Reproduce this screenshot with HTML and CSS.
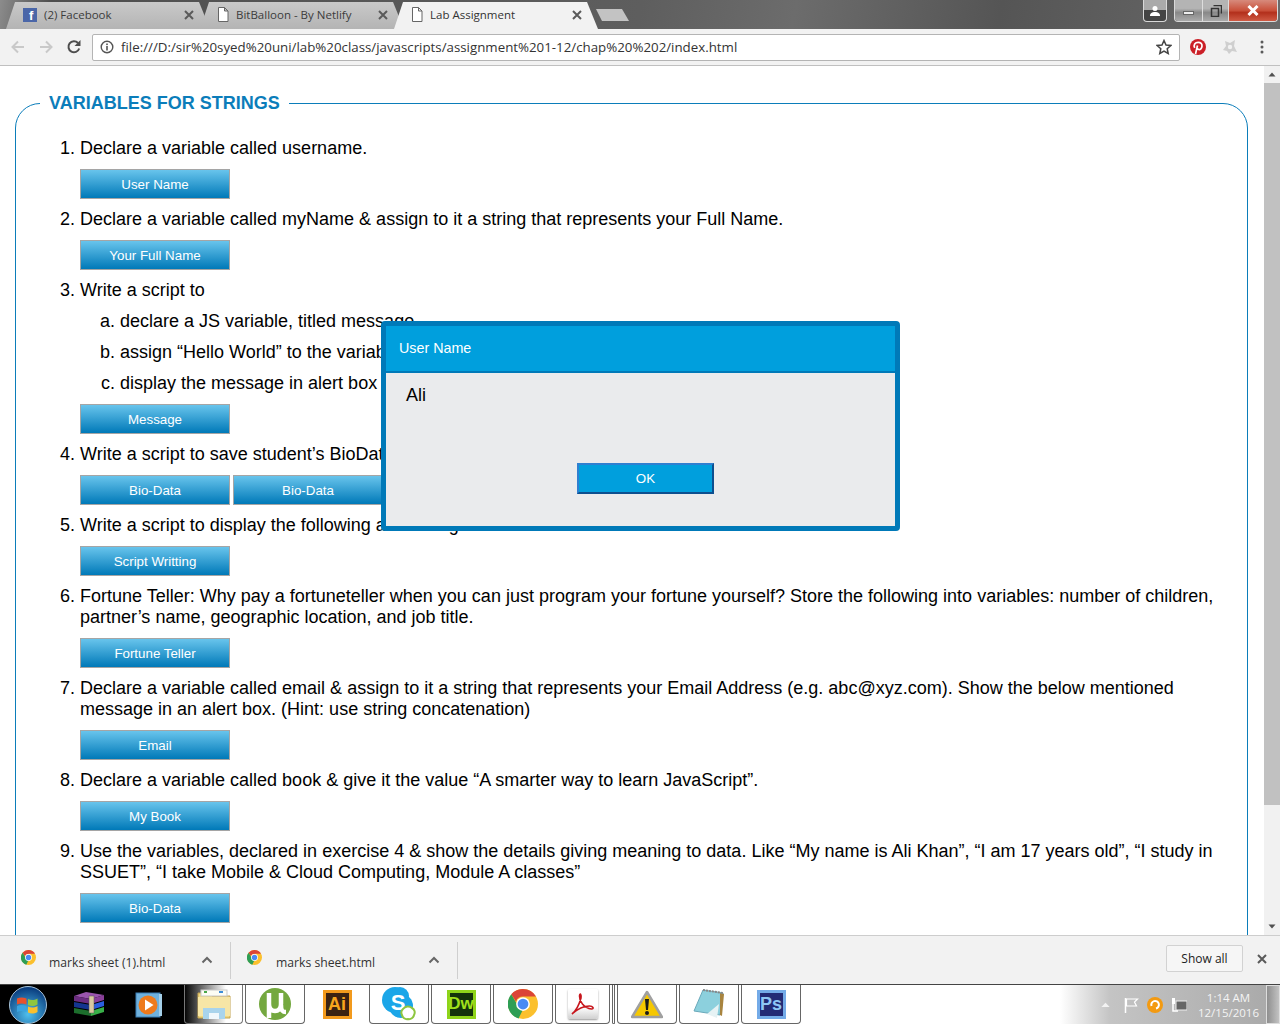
FILE: index.html
```html
<!DOCTYPE html>
<html lang="en">
<head>
<meta charset="utf-8">
<title>Lab Assignment</title>
<link rel="stylesheet" href="styles.css">
</head>
<body>
<svg class="defs" width="0" height="0" aria-hidden="true">
  <symbol id="chrome" viewBox="0 0 48 48">
    <circle cx="24" cy="24" r="24" fill="#fbc02d"/>
    <path d="M24 0a24 24 0 0 1 20.8 12H24a12 12 0 0 0-11.3 8L5.2 8.4A24 24 0 0 1 24 0z" fill="#db4437"/>
    <path d="M5.2 8.4l10.6 18.2a9 9 0 0 0 8 6.4L17 47A24 24 0 0 1 5.2 8.4z" fill="#2e9e55"/>
    <circle cx="24" cy="24" r="11" fill="#fff"/>
    <circle cx="24" cy="24" r="8.6" fill="#4a8af4"/>
  </symbol>
  <symbol id="page" viewBox="0 0 12 15">
    <path d="M1.500.5h6l3.500 3.500v10.500h-9.500zM7.500.5v3.500h3.500" fill="#fff" stroke="#666" stroke-width="1"/>
  </symbol>
  <symbol id="cross" viewBox="0 0 10 10">
    <path d="M1 1l8 8M9 1l-8 8" stroke="#5a5a5a" stroke-width="2" fill="none"/>
  </symbol>
  <symbol id="caret" viewBox="0 0 12 8">
    <path d="M1.500 6.500L6 2l4.500 4.500" stroke="#666" stroke-width="2" fill="none"/>
  </symbol>
</svg>

<header class="chrome">
  <div class="tabstrip">
    <div class="tab">
      <span class="fb-icon">f</span>
      <span class="tab-title">(2) Facebook</span>
      <svg class="tab-x"><use href="#cross"/></svg>
    </div>
    <div class="tab">
      <svg class="ico-page"><use href="#page"/></svg>
      <span class="tab-title">BitBalloon - By Netlify</span>
      <svg class="tab-x"><use href="#cross"/></svg>
    </div>
    <div class="tab tab-active">
      <svg class="ico-page"><use href="#page"/></svg>
      <span class="tab-title">Lab Assignment</span>
      <svg class="tab-x"><use href="#cross"/></svg>
    </div>
    <div class="newtab"></div>
    <div class="winctl">
      <div class="win-user">
        <svg width="12" height="12" viewBox="0 0 12 12"><circle cx="6" cy="3.500" r="2.500" fill="#fff"/><path d="M1 11c0-3 2-4 5-4s5 1 5 4z" fill="#fff"/></svg>
      </div>
      <div class="win-group">
        <div class="win-btn win-min"><span class="min-bar"></span></div>
        <div class="win-btn win-max">
          <svg width="12" height="12" viewBox="0 0 12 12"><path d="M3.500.5h8v8M1.500 3.500h7v8h-7z" fill="none" stroke="#333" stroke-width="1.500"/></svg>
        </div>
        <div class="win-btn win-close">
          <svg width="14" height="11" viewBox="0 0 14 11"><path d="M2.500 1l9 9M11.500 1l-9 9" stroke="#fff" stroke-width="3" fill="none"/></svg>
        </div>
      </div>
    </div>
  </div>
  <div class="toolbar">
    <svg class="tool-ico" viewBox="0 0 16 16"><path d="M14 8H3M8 2.500L2.500 8 8 13.500" stroke="#c9c9c9" stroke-width="2" fill="none"/></svg>
    <svg class="tool-ico" viewBox="0 0 16 16"><path d="M2 8h11M8 2.500L13.500 8 8 13.500" stroke="#c9c9c9" stroke-width="2" fill="none"/></svg>
    <svg class="tool-ico" viewBox="0 0 16 16"><path d="M13.200 9.500A5.500 5.500 0 1 1 12 4" stroke="#4d4d4d" stroke-width="2" fill="none"/><path d="M14.500 1v6h-6z" fill="#4d4d4d"/></svg>
    <div class="omnibox">
      <svg class="info-ico" viewBox="0 0 14 14"><circle cx="7" cy="7" r="5.800" fill="none" stroke="#555" stroke-width="1.400"/><rect x="6.200" y="6" width="1.600" height="4.500" fill="#555"/><rect x="6.200" y="3.500" width="1.600" height="1.600" fill="#555"/></svg>
      <span class="url">file:///D:/sir%20syed%20uni/lab%20class/javascripts/assignment%201-12/chap%20%202/index.html</span>
      <svg class="star-ico" viewBox="0 0 16 16"><path d="M8 1.500l2 4.500 4.800.5-3.600 3.200 1 4.800L8 12l-4.200 2.500 1-4.800L1.200 6.500 6 6z" fill="none" stroke="#444" stroke-width="1.500"/></svg>
    </div>
    <div class="ext-icons">
      <svg class="ext-ico" viewBox="0 0 16 16"><circle cx="8" cy="8" r="8" fill="#cb1f27"/><path d="M5.500 15l2-8.500M4.700 8.800C3.200 6 5 3.300 8.200 3.300c2.600 0 4 1.700 3.800 3.800-.2 2.300-1.800 3.800-3.300 3.400-.9-.2-1.300-.8-1.300-1.500" stroke="#fff" stroke-width="1.700" fill="none"/></svg>
      <svg class="ext-ico" viewBox="0 0 16 16"><path d="M3 2l5 2 5-3-1 6 3 6-5-1-3 3-2-3-4-1 3-4z" fill="#cfcfcf"/><circle cx="8" cy="8" r="2.200" fill="#f2f2f2"/></svg>
      <svg class="ext-ico" viewBox="0 0 16 16"><circle cx="8" cy="3" r="1.500" fill="#5a5a5a"/><circle cx="8" cy="8" r="1.500" fill="#5a5a5a"/><circle cx="8" cy="13" r="1.500" fill="#5a5a5a"/></svg>
    </div>
  </div>
</header>

<main class="viewport">
  <div class="page">
    <fieldset class="panel">
      <legend class="panel-title">VARIABLES FOR STRINGS</legend>
      <ol class="tasks">
        <li>Declare a variable called username.
          <div class="btns"><button class="btn">User Name</button></div>
        </li>
        <li>Declare a variable called myName &amp; assign to it a string that represents your Full Name.
          <div class="btns"><button class="btn">Your Full Name</button></div>
        </li>
        <li>Write a script to
          <ol class="subtasks">
            <li>declare a JS variable, titled message</li>
            <li>assign “Hello World” to the variable</li>
            <li>display the message in alert box</li>
          </ol>
          <div class="btns"><button class="btn">Message</button></div>
        </li>
        <li>Write a script to save student’s BioData:
          <div class="btns"><button class="btn">Bio-Data</button><button class="btn">Bio-Data</button></div>
        </li>
        <li>Write a script to display the following alert using
          <div class="btns"><button class="btn">Script Writting</button></div>
        </li>
        <li>Fortune Teller: Why pay a fortuneteller when you can just program your fortune yourself? Store the following into variables: number of children, partner’s name, geographic location, and job title.
          <div class="btns"><button class="btn">Fortune Teller</button></div>
        </li>
        <li>Declare a variable called email &amp; assign to it a string that represents your Email Address (e.g. abc@xyz.com). Show the below mentioned message in an alert box. (Hint: use string concatenation)
          <div class="btns"><button class="btn">Email</button></div>
        </li>
        <li>Declare a variable called book &amp; give it the value “A smarter way to learn JavaScript”.
          <div class="btns"><button class="btn">My Book</button></div>
        </li>
        <li>Use the variables, declared in exercise 4 &amp; show the details giving meaning to data. Like “My name is Ali Khan”, “I am 17 years old”, “I study in SSUET”, “I take Mobile &amp; Cloud Computing, Module A classes”
          <div class="btns"><button class="btn">Bio-Data</button></div>
        </li>
      </ol>
    </fieldset>
  </div>
  <div class="scrollbar">
    <svg class="sb-arrow" viewBox="0 0 16 16"><path d="M4.500 10L8 6l3.500 4z" fill="#505050"/></svg>
    <div class="sb-track"><div class="sb-thumb"></div></div>
    <svg class="sb-arrow" viewBox="0 0 16 16"><path d="M4.500 6L8 10l3.500-4z" fill="#505050"/></svg>
  </div>
  <div class="dialog">
    <div class="dialog-head">User Name</div>
    <div class="dialog-body">
      <p class="dialog-msg">Ali</p>
      <div class="dialog-foot"><button class="dialog-ok">OK</button></div>
    </div>
  </div>
</main>

<section class="downloads">
  <div class="dl-item">
    <svg class="dl-ico"><use href="#chrome"/></svg>
    <span class="dl-name">marks sheet (1).html</span>
    <svg class="dl-caret"><use href="#caret"/></svg>
  </div>
  <div class="dl-item">
    <svg class="dl-ico"><use href="#chrome"/></svg>
    <span class="dl-name">marks sheet.html</span>
    <svg class="dl-caret"><use href="#caret"/></svg>
  </div>
  <div class="dl-spacer"></div>
  <button class="showall">Show all</button>
  <svg class="dl-close"><use href="#cross"/></svg>
</section>

<footer class="taskbar">
  <div class="start">
    <svg width="38" height="38" viewBox="0 0 38 38">
      <defs><radialGradient id="orb" cx="50%" cy="75%" r="70%"><stop offset="0" stop-color="#4fc0ee"/><stop offset="1" stop-color="#0b3f80"/></radialGradient></defs>
      <circle cx="19" cy="19" r="18.500" fill="url(#orb)" stroke="#a8c4d8"/>
      <path d="M8 12.500c3-1.500 6-1.500 9.500 0v6c-3.500-1.500-6.500-1.500-9.500 0z" fill="#e8522d"/>
      <path d="M19 13c3 1.500 6 1.500 9.500-.5v6c-3.500 2-6.500 2-9.500.5z" fill="#8fc63f"/>
      <path d="M8 20c3-1.500 6-1.500 9.500 0v6c-3.500-1.500-6.500-1.500-9.500 0z" fill="#3aa4e0"/>
      <path d="M19 20.500c3 1.500 6 1.500 9.500-.5v6c-3.500 2-6.500 2-9.500.5z" fill="#fbc02d"/>
    </svg>
  </div>
  <div class="tb-pin tb-winrar">
    <svg width="32" height="26" viewBox="0 0 32 26">
      <path d="M1 4l12-4 18 3-13 4z" fill="#9a55ad"/><path d="M1 4l17 3v5L1 9z" fill="#6b2d80"/><path d="M18 7l13-4v5l-13 4z" fill="#8a3f9a"/>
      <path d="M1 10l17 3v5L1 15z" fill="#14358f"/><path d="M18 13l13-4v5l-13 4z" fill="#2a5ee0"/>
      <path d="M1 16l17 3v5L1 21z" fill="#1c6e2c"/><path d="M18 19l13-4v5l-13 4z" fill="#38b048"/>
      <rect x="16" y="4" width="5" height="17" fill="#d9c9a0" stroke="#555" stroke-width=".5"/>
    </svg>
  </div>
  <div class="tb-pin tb-media">
    <svg width="28" height="28" viewBox="0 0 28 28">
      <rect x="1" y="2" width="24" height="24" fill="#6fb1dd" stroke="#3a7fb5"/><rect x="24" y="3" width="3" height="22" fill="#a4cfe9"/>
      <circle cx="13" cy="14" r="9.500" fill="#ee7a1c"/><path d="M10 8.500L18.500 14 10 19.500z" fill="#fff"/>
    </svg>
  </div>
  <div class="tb-app tb-folder">
    <svg width="34" height="33" viewBox="0 0 34 33">
      <path d="M1 5h12l2 3h18v22H1z" fill="#f1d77f" stroke="#c3a350"/><rect x="4" y="2" width="26" height="6" fill="#fdfdf5" stroke="#c9c9c9"/>
      <rect x="7" y="3" width="3" height="2" fill="#4aa84a"/><rect x="22" y="3" width="4" height="2" fill="#3d8ed8"/>
      <rect x="1" y="9" width="32" height="19" fill="#f7e6a6"/><rect x="6" y="20" width="22" height="11" fill="#a9d4ec"/><rect x="12" y="25" width="10" height="6" fill="#f0f8fc"/>
    </svg>
  </div>
  <div class="tb-app">
    <svg width="32" height="32" viewBox="0 0 32 32">
      <circle cx="16" cy="16" r="16" fill="#74a83f"/>
      <path d="M10 5v25M10 16c0 5 3 7 6 7s6-2 6-7V5M22 17c0 5 1 7 5 7" fill="none" stroke="#fff" stroke-width="4.500"/>
    </svg>
  </div>
  <div class="tb-pin tb-ai"><span class="logo logo-ai">Ai</span></div>
  <div class="tb-app">
    <svg width="34" height="34" viewBox="0 0 34 34">
      <circle cx="13" cy="13" r="13" fill="#1ba6e8"/><rect x="9" y="0" width="18" height="18" rx="9" fill="#1ba6e8"/><circle cx="19" cy="19" r="12" fill="#1ba6e8"/>
      <text x="16" y="23" class="skype-s">S</text>
      <path d="M21 22a6 6 0 0 1 9-1 5 5 0 0 1 2 7 5 5 0 0 1-6 4 5 5 0 0 1-6-4 5 5 0 0 1 1-6z" fill="#fff" stroke="#8ec63f" stroke-width="2"/>
    </svg>
  </div>
  <div class="tb-app"><span class="logo logo-dw">Dw</span></div>
  <div class="tb-app"><svg width="30" height="30"><use href="#chrome"/></svg></div>
  <div class="tb-app tb-narrow">
    <div class="pdf-tile">
      <svg width="26" height="26" viewBox="0 0 26 26"><path d="M2 23c4-3 7-9 9-16 .5-3-1-6-1.500-2-.2 5 4 12 12 13 3 0 1.500-3-2-3-6 0-12 3-17.500 8z" fill="none" stroke="#c7161d" stroke-width="1.600"/></svg>
    </div>
  </div>
  <div class="tb-sliver"></div>
  <div class="tb-app">
    <svg width="32" height="29" viewBox="0 0 32 29">
      <path d="M16 2L31 27H1z" fill="#f6c800" stroke="#a0a0a0" stroke-width="2.500" stroke-linejoin="round"/>
      <path d="M14 9h4l-1 11h-2z" fill="#1a1a1a"/><circle cx="16" cy="23" r="2" fill="#1a1a1a"/>
    </svg>
  </div>
  <div class="tb-app">
    <svg width="32" height="31" viewBox="0 0 32 31">
      <path d="M10 1l20 3-3 22L1 22z" fill="#8cd0dd" stroke="#6aa9ba"/><path d="M27 4l4 1-2 22-2-1z" fill="#a8843f"/>
      <path d="M26 15l-2 14-10-4z" fill="#e6f2f4"/><path d="M10 1l20 3" stroke="#888" stroke-width="2" stroke-dasharray="2 1"/>
    </svg>
  </div>
  <div class="tb-app"><span class="logo logo-ps">Ps</span></div>
  <div class="tb-spacer"></div>
  <div class="tray">
    <svg class="tray-up" viewBox="0 0 10 6"><path d="M0 6l5-5 5 5z" fill="#f2f2f2"/></svg>
    <svg class="tray-ico" viewBox="0 0 16 16"><path d="M2.500 1v15" stroke="#fff" stroke-width="1.500"/><path d="M3.500 2h11l-3 3 2 4h-10z" fill="none" stroke="#fff" stroke-width="1.200"/></svg>
    <svg class="tray-ico" viewBox="0 0 16 16"><circle cx="8" cy="8" r="8" fill="#f39a11"/><path d="M4.500 9A3.800 3.800 0 1 1 9 11.500" stroke="#fff" stroke-width="2" fill="none"/></svg>
    <svg class="tray-ico" viewBox="0 0 16 16"><rect x="5" y="4" width="11" height="9" fill="#666" stroke="#eee"/><path d="M2 2v12h5" stroke="#fff" stroke-width="1.500" fill="none"/><rect x="1" y="1" width="3" height="6" fill="#fff"/></svg>
    <div class="clock"><span>1:14 AM</span><span>12/15/2016</span></div>
    <div class="show-desktop"></div>
  </div>
</footer>
</body>
</html>
```

FILE: styles.css
```css
* { box-sizing: border-box; }
html, body { margin: 0; height: 100%; }
body {
  width: 1280px;
  height: 1024px;
  overflow: hidden;
  display: flex;
  flex-direction: column;
  font-family: "Liberation Sans", Arial, sans-serif;
  background: #fff;
  color: #000;
}
.defs { position: absolute; }

/* Browser frame */
.chrome { flex: none; height: 66px; display: flex; flex-direction: column; }
.tabstrip {
  height: 29px;
  display: flex;
  align-items: flex-end;
  padding-left: 6px;
  background: linear-gradient(100deg, #8c8c8c 0, #4e4e4e 4%, #5e5e5e 50%, #6c6c6c 62%, #555 78%, #6a6a6a 100%);
}
.tab {
  width: 204px;
  height: 27px;
  margin-right: -10px;
  padding: 0 16px 2px 17px;
  display: flex;
  align-items: center;
  gap: 7px;
  clip-path: polygon(9px 0, calc(100% - 11px) 0, 100% 100%, 0 100%);
  background: linear-gradient(#c9c9c9, #b4b4b4);
  font: 11.500px "Open Sans", sans-serif;
  color: #3c3c3c;
}
.tab-active { background: #f2f2f2; color: #333; position: relative; }
.fb-icon {
  width: 14px;
  height: 14px;
  flex: none;
  padding: 1px 0 0 6px;
  background: #4a66a8;
  color: #fff;
  font: bold 13px/13px "Liberation Sans", sans-serif;
}
.ico-page { width: 12px; height: 15px; flex: none; }
.tab-title { flex: 1; white-space: nowrap; overflow: hidden; }
.tab-x { width: 10px; height: 10px; flex: none; }
.newtab {
  width: 33px;
  height: 12px;
  margin: 0 0 8px 8px;
  clip-path: polygon(0 0, 26px 0, 100% 100%, 6px 100%);
  background: #c3c3c3;
}
.winctl { margin-left: auto; align-self: flex-start; display: flex; gap: 7px; padding-right: 2px; }
.win-user, .win-group {
  height: 22px;
  border: 1px solid #d9d9d9;
  border-top: none;
  border-radius: 0 0 4px 4px;
  overflow: hidden;
  display: flex;
}
.win-user {
  width: 24px;
  align-items: center;
  justify-content: center;
  background: linear-gradient(#aaa 50%, #444 50%);
}
.win-btn { height: 100%; display: flex; align-items: center; justify-content: center; }
.win-min, .win-max { background: linear-gradient(#b4b4b4 40%, #888 60%, #aaa); border-right: 1px solid #ddd; }
.win-min { width: 28px; }
.win-max { width: 26px; }
.win-close { width: 48px; background: linear-gradient(#d78a7c 0, #c9503a 50%, #b3301c 60%, #cf5a44); }
.min-bar { width: 11px; height: 4px; margin-top: 4px; background: #eee; border: 1px solid #666; }

.toolbar {
  height: 37px;
  display: flex;
  align-items: center;
  padding: 0 10px;
  gap: 12px;
  background: #f2f2f2;
  border-bottom: 1px solid #c0c0c0;
}
.tool-ico { width: 16px; height: 16px; flex: none; }
.omnibox {
  flex: none;
  width: 1088px;
  height: 27px;
  margin-left: -2px;
  display: flex;
  align-items: center;
  gap: 7px;
  padding: 0 7px;
  background: #fff;
  border: 1px solid #b4b4b4;
  border-radius: 2px;
  font: 13.300px "Open Sans", sans-serif;
  color: #333;
}
.info-ico { width: 14px; height: 14px; flex: none; }
.url { flex: 1; white-space: nowrap; overflow: hidden; }
.star-ico { width: 16px; height: 16px; flex: none; }
.ext-icons { display: flex; gap: 16px; margin-left: -2px; }
.ext-ico { width: 16px; height: 16px; flex: none; }

/* Page */
.viewport { flex: 1; min-height: 0; display: flex; position: relative; }
.page { flex: 1; min-width: 0; overflow: hidden; }
.panel {
  margin: 27px 16px 0 15px;
  padding: 0 0 60px;
  min-width: 0;
  border: 1px solid #0b7dba;
  border-radius: 25px;
}
.panel-title {
  margin-left: 24px;
  padding: 0 9px;
  font-size: 18px;
  line-height: 21px;
  font-weight: bold;
  color: #0b7dba;
}
.tasks {
  margin: 24px 0 0;
  padding: 0 19px 0 64px;
  font-size: 18px;
  line-height: 21px;
}
.tasks > li { padding-bottom: 10px; }
.subtasks { margin: 10px 0 0; padding-left: 40px; list-style: lower-alpha; }
.subtasks > li { margin-bottom: 10.050px; }
.btns { display: flex; gap: 3px; margin-top: 10px; }
.btn {
  width: 150px;
  height: 30px;
  padding: 0;
  border: 1px solid #a5a5a5;
  background: linear-gradient(#68c4ec, #0079b8);
  color: #fff;
  font: 13.330px "Liberation Sans", sans-serif;
}

/* Dialog */
.dialog {
  position: absolute;
  left: 381px;
  top: 255px;
  width: 519px;
  height: 210px;
  display: flex;
  flex-direction: column;
  border: 5px solid #0079b8;
  border-radius: 4px;
  background: #eaebed;
}
.dialog-head {
  height: 47px;
  flex: none;
  padding: 0 0 2px 13px;
  display: flex;
  align-items: center;
  background: #009fdd;
  border-bottom: 2px solid #0079b8;
  color: #fff;
  font-size: 14.300px;
}
.dialog-body { flex: 1; display: flex; flex-direction: column; padding: 12px 20px 32px; }
.dialog-msg { margin: 0; flex: 1; font-size: 18px; line-height: 21px; }
.dialog-foot { display: flex; justify-content: center; padding-left: 10px; }
.dialog-ok {
  width: 137px;
  height: 31px;
  padding: 0;
  background: #009fdd;
  border: 2px solid;
  border-color: #2f7fd0 #0d4f8f #0d4f8f #2f7fd0;
  color: #fff;
  font: 13.330px "Liberation Sans", sans-serif;
}

/* Scrollbar */
.scrollbar { width: 16px; flex: none; display: flex; flex-direction: column; background: #f1f1f1; }
.sb-arrow { width: 16px; height: 17px; flex: none; }
.sb-track { flex: 1; min-height: 0; }
.sb-thumb { height: 722px; background: #c1c1c1; }

/* Downloads */
.downloads {
  flex: none;
  height: 49px;
  display: flex;
  align-items: center;
  background: #f2f2f2;
  border-top: 1px solid #cdcdcd;
  font: 12.200px "Open Sans", sans-serif;
  color: #333;
}
.dl-item {
  width: 231px;
  height: 37px;
  padding-left: 21px;
  display: flex;
  align-items: center;
  border-right: 1px solid #cfcfcf;
}
.dl-item + .dl-item { width: 227px; padding-left: 16px; }
.dl-item + .dl-item .dl-ico { margin-right: 14px; }
.dl-ico { width: 15px; height: 15px; flex: none; margin: -6px 13px 0 0; }
.dl-name { width: 152px; flex: none; white-space: nowrap; padding-top: 4px; }
.dl-caret { width: 12px; height: 8px; flex: none; }
.dl-spacer { flex: 1; }
.showall {
  width: 77px;
  height: 27px;
  margin-top: -3px;
  padding: 0;
  background: #f6f6f6;
  border: 1px solid #d2d2d2;
  border-radius: 2px;
  color: #222;
  font: 12px "Open Sans", sans-serif;
}
.dl-close { width: 10px; height: 10px; margin: -3px 13px 0 14px; }

/* Taskbar */
.taskbar {
  flex: none;
  height: 40px;
  display: flex;
  align-items: stretch;
  gap: 2px;
  border-top: 1px solid #444;
  background: linear-gradient(90deg, #000 0, #000 184px, #fff 226px, #fff 1060px, #c4c4c4 1110px, #a8a8a8 1280px);
}
.start { width: 55px; flex: none; display: flex; align-items: center; justify-content: center; padding-top: 1px; }
.tb-pin { display: flex; align-items: center; justify-content: center; flex: none; }
.tb-winrar { width: 64px; }
.tb-media { width: 52px; margin-right: 7px; }
.tb-ai { width: 60px; }
.tb-app {
  width: 60px;
  flex: none;
  display: flex;
  align-items: center;
  justify-content: center;
  border: 1px solid #666;
  border-top: none;
  border-radius: 0 0 4px 4px;
}
.tb-narrow { width: 55px; }
.tb-folder { width: 59px; border-color: #777; }
.tb-sliver { width: 3px; flex: none; border: 1px solid #666; border-top: none; border-radius: 0 0 2px 2px; }
.logo {
  width: 29px;
  height: 29px;
  display: flex;
  align-items: center;
  justify-content: center;
  font: bold 18px "Liberation Sans", sans-serif;
}
.logo-ai { background: #3b2212; color: #f8a51d; border: 3px solid #f29a1d; }
.logo-dw { background: #13330b; color: #9fe01b; border: 3px solid #8ed41a; font-size: 17px; }
.logo-ps { background: #232a75; color: #8ec6f5; border: 3px solid #74abe8; }
.skype-s { font: bold 22px "Liberation Sans", sans-serif; fill: #fff; text-anchor: middle; }
.pdf-tile {
  width: 30px;
  height: 30px;
  display: flex;
  align-items: center;
  justify-content: center;
  border-radius: 2px;
  background: linear-gradient(#fff 60%, #d0d0d0);
  box-shadow: 0 1px 2px #999;
}
.tb-spacer { flex: 1; }
.tray { display: flex; align-items: center; color: #f4f4f4; }
.tray-up { width: 9px; height: 5px; margin-right: 13px; }
.tray-ico { width: 16px; height: 16px; margin-right: 8px; }
.clock {
  width: 65px;
  margin-left: 1px;
  display: flex;
  flex-direction: column;
  align-items: center;
  font: 11.500px/15px "Open Sans", sans-serif;
}
.show-desktop {
  width: 14px;
  height: 100%;
  margin-left: 5px;
  border: 1px solid #ddd;
  background: linear-gradient(90deg, #8f8f8f, #c2c2c2);
}
```
